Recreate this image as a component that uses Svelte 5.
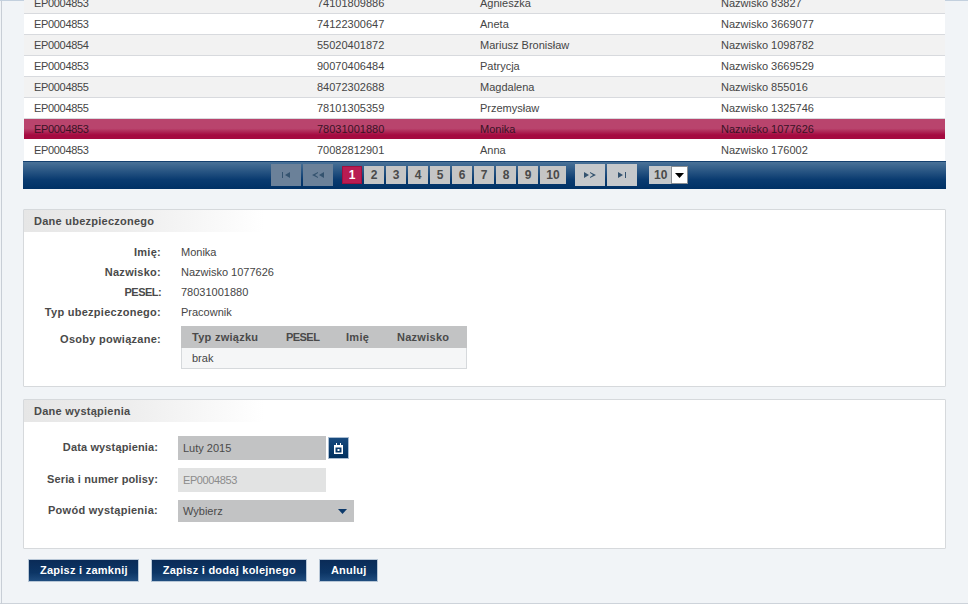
<script>
  const rows = [
    ['EP0004853','74101809886','Agnieszka','Nazwisko 83827','alt'],
    ['EP0004853','74122300647','Aneta','Nazwisko 3669077',''],
    ['EP0004854','55020401872','Mariusz Bronisław','Nazwisko 1098782','alt'],
    ['EP0004853','90070406484','Patrycja','Nazwisko 3669529',''],
    ['EP0004855','84072302688','Magdalena','Nazwisko 855016','alt'],
    ['EP0004855','78101305359','Przemysław','Nazwisko 1325746',''],
    ['EP0004853','78031001880','Monika','Nazwisko 1077626','sel'],
    ['EP0004853','70082812901','Anna','Nazwisko 176002',''],
  ];
  const pages = [2,3,4,5,6,7,8,9,10];
  const info = [['Imię:','Monika',''],['Nazwisko:','Nazwisko 1077626',''],['PESEL:','78031001880','caps'],['Typ ubezpieczonego:','Pracownik','']];
</script>

<div class="page">
  <div class="table">
    {#each rows as r}
      <div class="row {r[4]}">
        <span class="code">{r[0]}</span><span>{r[1]}</span><span>{r[2]}</span><span>{r[3]}</span>
      </div>
    {/each}
    <div class="pager">
      <div class="nav"><svg width="10" height="6" viewBox="0 0 10 6"><path d="M1 0h1v6H1zM9 0v6L4 3z" fill="#34536f"/></svg></div>
      <div class="nav"><svg width="12" height="6" viewBox="0 0 12 6"><path d="M6 0v1L3 3l3 2v1L0 3zM12 0v6L7 3z" fill="#34536f"/></svg></div>
      <div class="pg cur">1</div>
      {#each pages as p}<div class="pg" class:wide={p === 10}>{p}</div>{/each}
      <div class="nav next"><svg width="12" height="6" viewBox="0 0 12 6"><path d="M0 0v6l5-3zM6 0v1l3 2-3 2v1l6-3z" fill="#34536f"/></svg></div>
      <div class="nav"><svg width="10" height="6" viewBox="0 0 10 6"><path d="M1 0v6l5-3zM8 0h1v6H8z" fill="#34536f"/></svg></div>
      <div class="size"><span>10</span><i><svg width="9" height="5" viewBox="0 0 9 5"><path d="M0 0h9L4.500 5z" fill="#000"/></svg></i></div>
    </div>
  </div>

  <section class="panel one">
    <h2>Dane ubezpieczonego</h2>
    <div class="info">
      {#each info as [k, v, c]}
        <b class={c}>{k}</b><span>{v}</span>
      {/each}
      <b class="rel">Osoby powiązane:</b>
      <div class="sub">
        <div class="subhead"><b>Typ związku</b><b class="caps">PESEL</b><b>Imię</b><b>Nazwisko</b></div>
        <div class="subrow">brak</div>
      </div>
    </div>
  </section>

  <section class="panel two">
    <h2>Dane wystąpienia</h2>
    <div class="form">
      <b class="tight">Data wystąpienia:</b>
      <div class="line">
        <div class="field date">Luty 2015</div>
        <div class="cal"><svg width="9" height="11" viewBox="0 0 9 11"><path d="M2 0h1v2H2zM6 0h1v2H6z" fill="#fff"/><path d="M0 2h9v9H0zM1.500 4.500v5h6v-5zM3.500 6h2v2h-2z" fill="#fff" fill-rule="evenodd"/></svg></div>
      </div>
      <b class="tight">Seria i numer polisy:</b>
      <div class="field off">EP0004853</div>
      <b>Powód wystąpienia:</b>
      <div class="field pick">Wybierz<svg width="9" height="5" viewBox="0 0 9 5"><path d="M0 0h9L4.500 5z" fill="#0d3a6b"/></svg></div>
    </div>
  </section>

  <div class="actions">
    <div class="btn">Zapisz i zamknij</div>
    <div class="btn">Zapisz i dodaj kolejnego</div>
    <div class="btn">Anuluj</div>
  </div>
</div>

<style>
  :global(body) { margin: 0; background: #f1f4f7; }
  .page {
    box-sizing: border-box; width: 968px; height: 604px; overflow: hidden;
    padding: 0 22px 0 23px;
    background: linear-gradient(#c3d0de, #c3d0de) 0 0/100% 1px no-repeat,
      linear-gradient(#c8ced6, #c8ced6) 1px 0/1px 100% no-repeat,
      linear-gradient(#cdd3da, #cdd3da) 0 100%/100% 1px no-repeat, #f1f4f7;
    font: 11px/13px "Liberation Sans", Arial, sans-serif; color: #454545;
  }
  .table { margin-top: -7px; }
  .row {
    box-sizing: border-box; height: 21px; margin: 0 1px; padding-left: 10px;
    display: grid; grid-template-columns: 283px 163px 241px 1fr; align-items: center;
    background: #fff; border-bottom: 1px solid #d8dade;
  }
  .code { letter-spacing: -.33px; }
  .row.alt { background: #f2f2f2; }
  .row.sel {
    background: linear-gradient(#b9446d 0, #b9446d 47%, #a50a40 80%, #a50a40 100%);
    color: #3a1225; border-bottom-color: #fff;
  }
  .row:nth-child(8) { border-bottom: 0; }
  .pager {
    box-sizing: border-box; height: 28px; padding: 2px 10px 0 0;
    display: flex; align-items: flex-start; justify-content: center; gap: 2px;
    background: linear-gradient(#4a7298, #0a3b70 65%, #003165);
    border-top: 1px solid #14406f;
  }
  .nav {
    width: 30px; height: 22px; display: flex; align-items: center; justify-content: center;
    background: #6b8199;
  }
  .nav:nth-child(2) { margin-right: 7px; }
  .nav.next, .nav.next ~ .nav { background: #c5c8cb; }
  .nav.next { margin-left: 7px; }
  .pg {
    box-sizing: border-box; width: 20px; height: 18px; margin-top: 2px;
    background: #c5c5c5; text-align: center;
    font-size: 12px; font-weight: bold; line-height: 18px; color: #4a4a4a;
  }
  .pg.wide { width: 26px; }
  .pg.cur { background: #b81c52; border: 1px solid #a0103f; color: #fff; line-height: 16px; }
  .size {
    box-sizing: border-box; width: 39px; height: 18px; margin: 2px 0 0 10px;
    background: #c5c8cb; display: flex; align-items: center; justify-content: space-between;
    padding-left: 5px; font-size: 12px; font-weight: bold; color: #4a4a4a;
  }
  .size i {
    box-sizing: border-box; width: 17px; height: 18px; background: #fff; border: 1px solid #8a8f94;
    display: flex; align-items: center; justify-content: center;
  }
  .panel { box-sizing: border-box; background: #fff; border: 1px solid #d6d9dc; border-radius: 1px; }
  .one { margin-top: 20px; height: 178px; }
  .two { margin-top: 12px; height: 150px; }
  h2 {
    margin: 0; height: 22px; padding-left: 10px;
    font: bold 11px/22px "Liberation Sans", Arial, sans-serif; color: #4a4a4a;
    letter-spacing: .25px;
    background: linear-gradient(90deg, #e6e6e6, #ededed 100px, #fff 240px);
  }
  .info {
    display: grid; grid-template-columns: 137px 1fr; column-gap: 20px; grid-auto-rows: 20px;
    align-items: center; padding-top: 10px;
  }
  b { font-weight: bold; color: #4a4a4a; letter-spacing: .27px; }
  b.caps { letter-spacing: -.55px; }
  b.tight { letter-spacing: .13px; }
  .info > b, .form > b { text-align: right; }
  .rel { align-self: start; padding-top: 11px; }
  .sub { align-self: start; grid-row: span 3; width: 286px; margin-top: 4px; }
  .subhead {
    height: 22px; background: #c2c3c4;
    display: grid; grid-template-columns: 94px 60px 51px 1fr; padding-left: 11px; align-items: center;
  }
  .subrow {
    box-sizing: border-box; height: 21px; padding-left: 10px; line-height: 20px;
    background: #f5f6f7; border: 1px solid #d6d9dc; border-top: 0;
  }
  .form {
    display: grid; grid-template-columns: 134px 1fr; column-gap: 20px; align-items: center;
    padding-top: 14px; row-gap: 8px;
  }
  .form > b { padding-bottom: 2px; }
  .line { display: flex; align-items: center; gap: 2px; }
  .field {
    box-sizing: border-box; height: 24px; width: 148px; padding-left: 5px; line-height: 24px; background: #c2c3c4; color: #4a4a4a;
  }
  .off { background: #e2e3e3; color: #8c8c8c; letter-spacing: -.4px; }
  .pick {
    width: 176px; height: 22px; line-height: 22px; padding-right: 7px;
    display: flex; justify-content: space-between; align-items: center;
  }
  .cal {
    box-sizing: border-box; width: 21px; height: 22px; display: flex; align-items: center; justify-content: center;
    background: linear-gradient(#184a7e, #00305f); border: 1px solid #a9bdd2;
  }
  .actions { display: flex; gap: 12px; padding: 10px 0 0 5px; }
  .btn {
    box-sizing: border-box; height: 23px; padding: 0 10px 0 11px; line-height: 21px;
    background: linear-gradient(#0a2b57, #0c3565 60%, #1f4c7e);
    border: 1px solid #b7c6d6; color: #fff; font-weight: bold; font-size: 11px; letter-spacing: .25px;
  }
</style>
